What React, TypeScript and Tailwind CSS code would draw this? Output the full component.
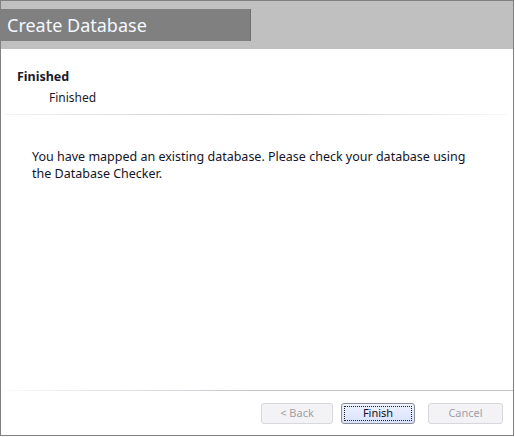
import React from 'react';

const font = { fontFamily: '"Noto Sans", "Open Sans", sans-serif' };

export default function App() {
  return (
    <div className="w-[515px] h-[437px] bg-white" style={font}>
      <div className="flex h-[436px] w-[514px] flex-col border border-[#808080] bg-white">
        {/* header band */}
        <div className="h-[48px] bg-[#c0c0c0] pt-[8px]">
          <div className="flex h-[32px] w-[250px] items-center border-r border-[#6e6e6e] bg-[#808080] pl-[6px] text-[18px] text-[#f4f8ff]">
            Create Database
          </div>
        </div>

        {/* step title */}
        <div className="px-[16px] pt-[20px] text-[12.5px] text-[#1a1a2a]">
          <div className="font-bold leading-[16px]">Finished</div>
          <div className="pl-[32px] pt-[5px] text-[12px] leading-[16px]">Finished</div>
        </div>
        <div className="mx-[4px] mt-[8px] h-px bg-gradient-to-r from-[#f4f4f6] via-[#c4c4cc] to-[#f8f8f8]" />

        {/* body */}
        <div className="flex-1 px-[31px] pt-[33px] text-[12.5px] leading-[17px] text-[#141428]">
          <div className="w-[440px]">
            You have mapped an existing database. Please check your database using the Database Checker.
          </div>
        </div>

        {/* footer */}
        <div className="ml-[4px] h-px bg-gradient-to-r from-[#fafafa] via-[#c4c4cc] to-[#c4c4cc]" />
        <div className="flex h-[44px] items-start justify-end gap-[8px] pr-[10px] pt-[12px] text-[11px]">
          <button className="h-[21px] w-[72px] rounded-[3px] border border-[#d8d8dc] bg-[#f3f3f5] text-[#a0a0a8]">
            &lt; Back
          </button>
          <button className="mr-[5px] h-[21px] w-[74px] rounded-[3px] border border-[#8a8e98] bg-gradient-to-b from-[#eef2fe] to-[#d8e2fc] p-[2px] text-[#101020]">
            <span className="flex h-full w-full items-center justify-center border border-dotted border-[#202020]">
              Finish
            </span>
          </button>
          <button className="h-[21px] w-[75px] rounded-[3px] border border-[#d8d8dc] bg-[#f3f3f5] text-[#a0a0a8]">
            Cancel
          </button>
        </div>
      </div>
    </div>
  );
}
